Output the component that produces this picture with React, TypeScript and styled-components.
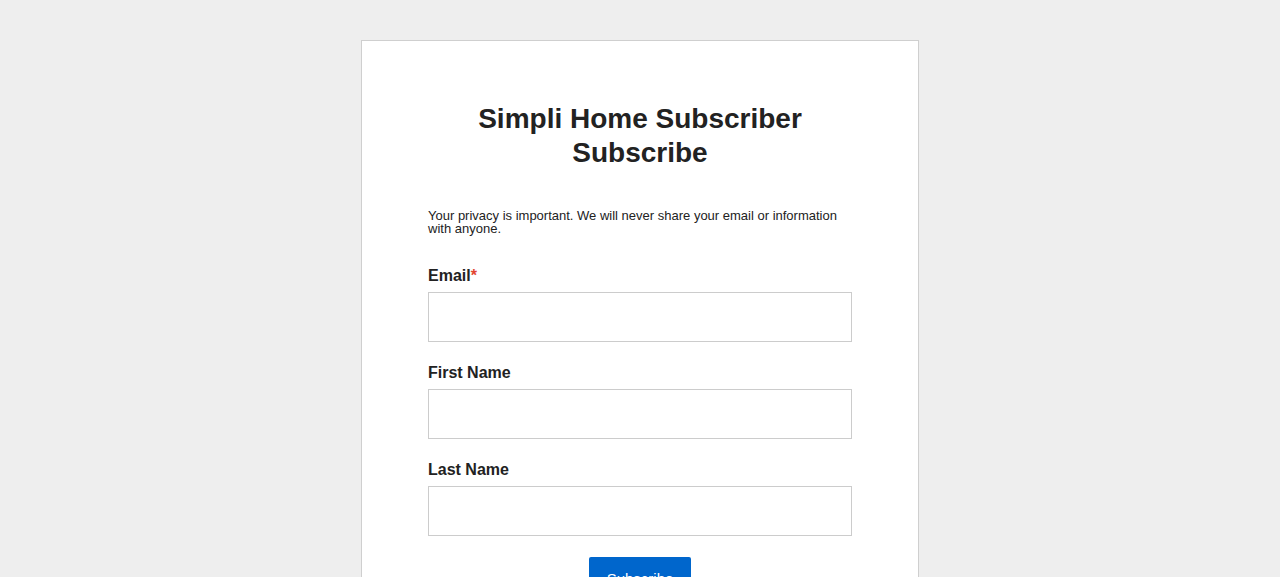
import styled, { createGlobalStyle } from "styled-components";

const GlobalStyle = createGlobalStyle`
  html, body {
    margin: 0;
    padding: 0;
    background: #eeeeee;
    font-family: "Liberation Sans", Arial, Helvetica, sans-serif;
    color: #222222;
  }
`;

const Page = styled.div`
  display: flex;
  justify-content: center;
  padding-top: 40px;
  min-height: 577px;
  box-sizing: border-box;
`;

const Card = styled.div`
  width: 558px;
  box-sizing: border-box;
  background: #ffffff;
  border: 1px solid #cfcfcf;
  padding: 61px 66px 40px;
`;

const Title = styled.h1`
  margin: 0 0 39px;
  font-size: 28px;
  line-height: 34px;
  font-weight: bold;
  text-align: center;
  color: #222222;
`;

const Privacy = styled.p`
  margin: 0 0 31px;
  font-size: 13px;
  line-height: 13px;
  color: #222222;
`;

const Field = styled.div`
  display: flex;
  flex-direction: column;
  margin-bottom: 21px;
`;

const Label = styled.label`
  font-size: 16px;
  line-height: 20px;
  font-weight: bold;
  margin-bottom: 6px;
  color: #222222;
`;

const Required = styled.span`
  color: #e2442f;
`;

const Input = styled.input`
  height: 50px;
  box-sizing: border-box;
  border: 1px solid #cccccc;
  border-radius: 0;
  padding: 0 12px;
  font-size: 16px;
  font-family: inherit;
  outline: none;
`;

const Actions = styled.div`
  display: flex;
  justify-content: center;
`;

const Button = styled.button`
  width: 102px;
  height: 42px;
  border: none;
  border-radius: 2px;
  background: #0066cc;
  color: #ffffff;
  font-family: inherit;
  font-size: 15px;
  cursor: pointer;
`;

const fields = [
  { id: "email", label: "Email", required: true },
  { id: "first", label: "First Name", required: false },
  { id: "last", label: "Last Name", required: false },
];

export default function App() {
  return (
    <>
      <GlobalStyle />
      <Page>
        <Card>
          <Title>
            Simpli Home Subscriber
            <br />
            Subscribe
          </Title>
          <Privacy>
            Your privacy is important. We will never share your email or information with anyone.
          </Privacy>
          {fields.map((f) => (
            <Field key={f.id}>
              <Label htmlFor={f.id}>
                {f.label}
                {f.required && <Required>*</Required>}
              </Label>
              <Input id={f.id} type={f.id === "email" ? "email" : "text"} />
            </Field>
          ))}
          <Actions>
            <Button type="button">Subscribe</Button>
          </Actions>
        </Card>
      </Page>
    </>
  );
}
